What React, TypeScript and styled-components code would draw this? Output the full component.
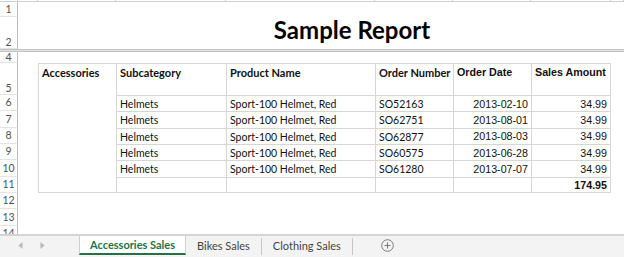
import React from "react";
import styled, { createGlobalStyle, css } from "styled-components";

const calibri = `"Lato", "Open Sans", sans-serif`;
const arial = `"Liberation Sans", Arial, sans-serif`;

const GlobalStyle = createGlobalStyle`
  html, body {
    margin: 0;
    padding: 0;
    background: #ffffff;
  }
  body {
    font-family: ${calibri};
  }
`;

const Page = styled.div`
  width: 624px;
  height: 257px;
  display: flex;
  flex-direction: column;
  overflow: hidden;
  background: #fff;
`;

// the worksheet: one grid line per sheet row / column
const Sheet = styled.div`
  flex: 1;
  min-height: 0;
  overflow: hidden;
  display: grid;
  grid-template-columns: 18px 20px 78px 110px 149px 78px 78px 80px 1fr;
  grid-template-rows: 2px 15px 32px 3px 11px 32px repeat(6, 16.33px) 16.5px 16.5px 16.5px;
`;

const StripCell = styled.div<{ $col: number }>`
  grid-row: 1;
  grid-column: ${(p) => p.$col};
  box-sizing: border-box;
  border-bottom: 1px solid #d0d0d0;
  border-right: 1px solid #d0d0d0;
`;

const RowHead = styled.div<{ $row: number; $valign?: "center" | "end" }>`
  grid-row: ${(p) => p.$row};
  grid-column: 1;
  box-sizing: border-box;
  display: flex;
  justify-content: center;
  align-items: ${(p) => (p.$valign === "end" ? "flex-end" : "center")};
  padding-bottom: ${(p) => (p.$valign === "end" ? "1px" : "0")};
  border-right: 1px solid #bdbdbd;
  border-bottom: 1px solid #e3e3e3;
  font-family: ${calibri};
  font-size: 10.5px;
  line-height: 1;
  color: #505050;
`;

const HiddenRowLine = styled.div`
  grid-row: 4;
  grid-column: 1 / -1;
  box-sizing: border-box;
  border-top: 1px solid #c4c4c4;
  border-bottom: 1px solid #c4c4c4;
  background: #dedede;
`;

const Title = styled.div`
  grid-row: 2 / span 2;
  grid-column: 3 / -1;
  display: flex;
  justify-content: center;
  align-items: flex-end;
  padding-left: 42px;
  padding-bottom: 7px;
  font-family: ${calibri};
  font-weight: 700;
  font-size: 24px;
  line-height: 1;
  color: #000;
`;

const Cell = styled.div<{
  $row: number;
  $col: number;
  $span?: number;
  $right?: boolean;
  $head?: boolean;
  $num?: boolean;
  $bold?: boolean;
  $last?: boolean;
  $bottom?: boolean;
}>`
  grid-row: ${(p) => p.$row} / span ${(p) => p.$span ?? 1};
  grid-column: ${(p) => p.$col};
  box-sizing: border-box;
  display: flex;
  justify-content: ${(p) => (p.$right ? "flex-end" : "flex-start")};
  align-items: ${(p) => (p.$head ? "flex-start" : "center")};
  padding: ${(p) => (p.$head ? "2px 3px 0 3px" : "1px 3px 0 3px")};
  border-left: 1px solid #d6d6d6;
  border-top: 1px solid #d6d6d6;
  ${(p) => p.$last && css`border-right: 1px solid #d6d6d6;`}
  ${(p) => p.$bottom && css`border-bottom: 1px solid #d6d6d6;`}
  font-family: ${(p) => (p.$num ? arial : calibri)};
  font-size: ${(p) => (p.$num ? "10.7px" : p.$head ? "11px" : "10.5px")};
  font-weight: ${(p) => (p.$bold || p.$head ? 700 : 400)};
  line-height: 1.2;
  color: #111;
  white-space: nowrap;
  overflow: hidden;
`;

const TabBar = styled.div`
  height: 23px;
  box-sizing: border-box;
  flex-shrink: 0;
  display: flex;
  align-items: stretch;
  padding-bottom: 2px;
  border-top: 2px solid #d4d4d4;
  background: #f3f3f3;
  font-family: ${calibri};
`;

const NavArea = styled.div`
  width: 79px;
  display: flex;
  align-items: center;
  gap: 17px;
  padding-left: 18px;
  box-sizing: border-box;
`;

const Tab = styled.div<{ $active?: boolean }>`
  display: flex;
  align-items: center;
  padding: 0 11px;
  font-size: 11px;
  color: #444;
  ${(p) =>
    p.$active &&
    css`
      padding: 0 10px;
      background: #fff;
      color: #217346;
      font-weight: 700;
      border-left: 1px solid #cfcfcf;
      border-right: 1px solid #cfcfcf;
      border-bottom: 2px solid #217346;
    `}
`;

const TabSeparator = styled.div`
  width: 1px;
  margin: 2px 0 0;
  background: #c6c6c6;
`;

const AddSheet = styled.div`
  display: flex;
  align-items: center;
  margin-left: 28px;
`;

const orders = [
  { no: "SO52163", date: "2013-02-10" },
  { no: "SO62751", date: "2013-08-01" },
  { no: "SO62877", date: "2013-08-03" },
  { no: "SO60575", date: "2013-06-28" },
  { no: "SO61280", date: "2013-07-07" },
];

const rowLabels: { label: string; row: number; valign?: "center" | "end" }[] = [
  { label: "1", row: 2 },
  { label: "2", row: 3, valign: "end" },
  { label: "4", row: 5 },
  { label: "5", row: 6, valign: "end" },
  { label: "6", row: 7 },
  { label: "7", row: 8 },
  { label: "8", row: 9 },
  { label: "9", row: 10 },
  { label: "10", row: 11 },
  { label: "11", row: 12 },
  { label: "12", row: 13 },
  { label: "13", row: 14 },
  { label: "14", row: 15 },
];

const App: React.FC = () => {
  return (
    <Page>
      <GlobalStyle />
      <Sheet>
        {[1, 2, 3, 4, 5, 6, 7, 8, 9].map((c) => (
          <StripCell key={c} $col={c} />
        ))}
        {rowLabels.map((r) => (
          <RowHead key={r.label} $row={r.row} $valign={r.valign}>
            {r.label}
          </RowHead>
        ))}
        <HiddenRowLine />
        <Title>Sample Report</Title>

        {/* header row */}
        <Cell $row={6} $col={3} $span={7} $head $bottom>
          Accessories
        </Cell>
        <Cell $row={6} $col={4} $head>Subcategory</Cell>
        <Cell $row={6} $col={5} $head>Product Name</Cell>
        <Cell $row={6} $col={6} $head>Order Number</Cell>
        <Cell $row={6} $col={7} $head $num>Order Date</Cell>
        <Cell $row={6} $col={8} $head $num $last>Sales Amount</Cell>

        {orders.map((o, i) => (
          <React.Fragment key={o.no}>
            <Cell $row={7 + i} $col={4}>Helmets</Cell>
            <Cell $row={7 + i} $col={5}>Sport-100 Helmet, Red</Cell>
            <Cell $row={7 + i} $col={6}>{o.no}</Cell>
            <Cell $row={7 + i} $col={7} $num $right>{o.date}</Cell>
            <Cell $row={7 + i} $col={8} $num $right $last>34.99</Cell>
          </React.Fragment>
        ))}

        {/* total row */}
        <Cell $row={12} $col={4} $bottom />
        <Cell $row={12} $col={5} $bottom />
        <Cell $row={12} $col={6} $bottom />
        <Cell $row={12} $col={7} $bottom />
        <Cell $row={12} $col={8} $num $right $bold $last $bottom>
          174.95
        </Cell>
      </Sheet>

      <TabBar>
        <NavArea>
          <svg width="5" height="7" viewBox="0 0 5 7">
            <polygon points="4.5,0 4.5,7 0.5,3.5" fill="#b8b8b8" />
          </svg>
          <svg width="5" height="7" viewBox="0 0 5 7">
            <polygon points="0.5,0 0.5,7 4.5,3.5" fill="#b8b8b8" />
          </svg>
        </NavArea>
        <Tab $active>Accessories Sales</Tab>
        <Tab>Bikes Sales</Tab>
        <TabSeparator />
        <Tab>Clothing Sales</Tab>
        <TabSeparator />
        <AddSheet>
          <svg width="13" height="13" viewBox="0 0 13 13">
            <circle cx="6.5" cy="6.5" r="5.8" fill="none" stroke="#7a7a7a" strokeWidth="1" />
            <path d="M6.5 3.6v5.8M3.6 6.5h5.8" stroke="#7a7a7a" strokeWidth="1.1" />
          </svg>
        </AddSheet>
      </TabBar>
    </Page>
  );
};

export default App;
